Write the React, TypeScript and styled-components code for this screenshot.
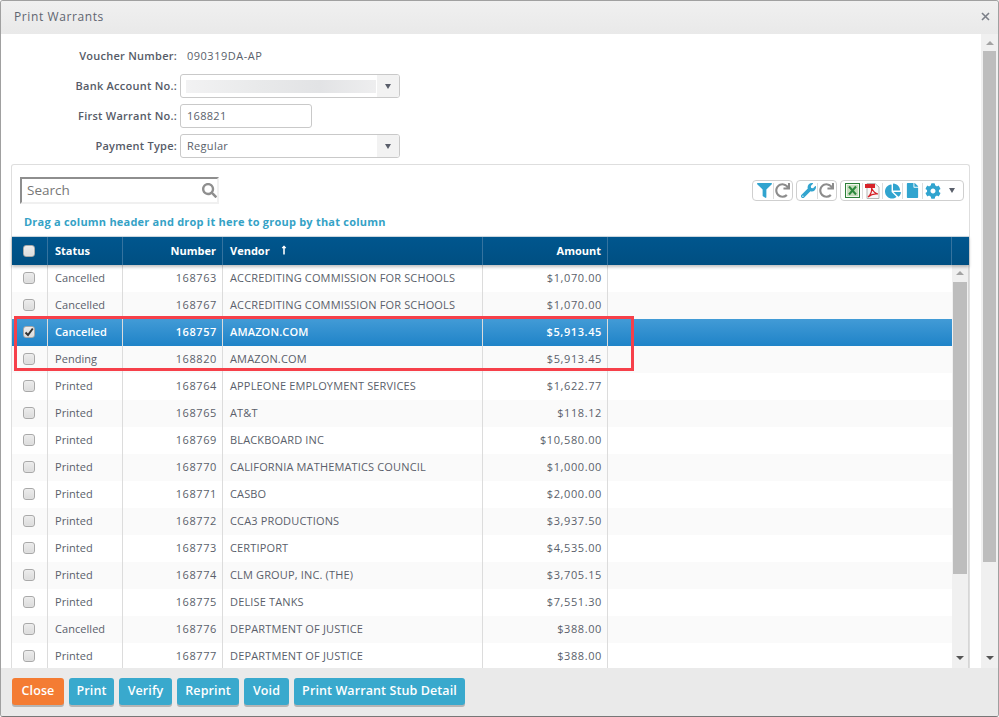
import React from 'react';
import styled, { createGlobalStyle } from 'styled-components';
import { FaCog, FaChartPie, FaFile, FaFilter, FaLongArrowAltUp, FaRedo, FaSearch, FaWrench } from 'react-icons/fa';

const COLUMNS = '36px 75px 100px 260px 125px 1fr';

const GlobalStyle = createGlobalStyle`
  html, body {
    margin: 0;
    padding: 0;
    background: #fff;
  }
  * {
    box-sizing: border-box;
  }
  body {
    font-family: "Open Sans", "Liberation Sans", sans-serif;
    font-size: 11px;
    color: #5a5f6b;
  }
`;

const Window = styled.div`
  width: 999px;
  height: 717px;
  display: flex;
  flex-direction: column;
  overflow: hidden;
  border: 1px solid #a0a0a0;
  border-bottom-color: #777;
  border-radius: 3px;
`;

const TitleBar = styled.div`
  height: 33px;
  flex: none;
  display: flex;
  align-items: center;
  justify-content: space-between;
  padding: 0 8px 2px 13px;
  background: linear-gradient(#f0f0f0, #e9e9e9);
  font-size: 12px;
  letter-spacing: 0.6px;
  color: #5f6570;
`;

const Content = styled.div`
  flex: 1;
  min-height: 0;
  display: flex;
  background: #fff;
`;

const Main = styled.div`
  flex: 1;
  min-width: 0;
  display: flex;
  flex-direction: column;
  padding: 10px 11px 0 10px;
`;

const Form = styled.div`
  display: flex;
  flex-direction: column;
  gap: 6px;
  margin-bottom: 6px;
  margin-left: -10px;
`;

const FormRow = styled.div`
  height: 24px;
  display: flex;
  align-items: center;
  gap: 3px;
`;

const Label = styled.div`
  width: 176px;
  padding-bottom: 2px;
  text-align: right;
  font-weight: 600;
  letter-spacing: 0.25px;
  color: #565b67;
`;

const StaticValue = styled.div`
  padding: 0 0 2px 7px;
  letter-spacing: 0.5px;
`;

const Field = styled.div<{ $width: number }>`
  width: ${(p) => p.$width}px;
  height: 24px;
  display: flex;
  align-items: center;
  justify-content: space-between;
  padding-left: 6px;
  border: 1px solid #c9c9c9;
  border-radius: 3px;
  letter-spacing: 0.3px;
  overflow: hidden;
`;

const FieldText = styled.span`
  margin-bottom: 2px;
`;

const Blurred = styled.div`
  width: 190px;
  height: 13px;
  margin-left: -1px;
  background: linear-gradient(90deg, #f2f2f3, #e8e9ea 40%, #e2e3e5 70%, #eeeeef);
`;

const Caret = styled.div<{ $plain?: boolean }>`
  width: ${(p) => (p.$plain ? 18 : 22)}px;
  flex: none;
  height: 100%;
  display: flex;
  align-items: center;
  justify-content: center;
  background: ${(p) => (p.$plain ? 'none' : '#f2f2f2')};
  &::after {
    content: '';
    border-left: 3.5px solid transparent;
    border-right: 3.5px solid transparent;
    border-top: 5px solid #5a5f6b;
  }
`;

const Card = styled.div`
  flex: 1;
  min-height: 0;
  display: flex;
  flex-direction: column;
  border: 1px solid #dedede;
  border-bottom: 0;
  border-radius: 3px 3px 0 0;
`;

const CardTop = styled.div`
  height: 71px;
  flex: none;
  padding: 12px 5px 0 8px;
  display: grid;
  grid-template-columns: 1fr auto;
  grid-template-rows: 27px auto;
  row-gap: 10px;
`;

const SearchBox = styled.div`
  width: 199px;
  height: 27px;
  display: flex;
  align-items: center;
  justify-content: space-between;
  padding: 0 0 0 5px;
  border: 2px solid #f0f0f0;
  border-top-color: #8e8e8e;
  border-left-color: #8e8e8e;
  font-size: 13.5px;
  color: #777;
  span {
    margin-bottom: 2px;
  }
  svg {
    color: #8f8f8f;
    font-size: 15px;
  }
`;

const Tools = styled.div`
  display: flex;
  gap: 3px;
  margin-top: 3px;
  align-items: flex-start;
`;

const ToolGroup = styled.div`
  height: 21px;
  display: flex;
  align-items: center;
  padding: 0 2px;
  border: 1px solid #cfcfcf;
  border-radius: 4px;
`;

const Tool = styled.div<{ $color?: string; $divider?: boolean; $size?: number; $width?: number }>`
  width: ${(p) => p.$width || 20}px;
  flex: none;
  height: 16px;
  display: flex;
  align-items: center;
  justify-content: center;
  color: ${(p) => p.$color || '#31a4cf'};
  font-size: ${(p) => p.$size || 15}px;
  border-right: ${(p) => (p.$divider ? '1px solid #dcdcdc' : '0')};
`;

const DragHint = styled.div`
  grid-column: 1 / 3;
  padding-left: 4px;
  font-weight: 700;
  font-size: 11px;
  letter-spacing: 0.22px;
  color: #34a2c6;
`;

const HeadRow = styled.div`
  position: relative;
  z-index: 1;
  flex: none;
  height: 29px;
  display: grid;
  grid-template-columns: ${COLUMNS} 17px;
  background: linear-gradient(#00568e, #004f82);
  border-top: 1px solid #c9d6df;
  box-shadow: 0 2px 3px rgba(0, 0, 0, 0.25);
  color: #fff;
  font-weight: 700;
  letter-spacing: 0;
`;

const HeadCell = styled.div<{ $right?: boolean; $center?: boolean }>`
  display: flex;
  align-items: center;
  gap: 9px;
  justify-content: ${(p) => (p.$right ? 'flex-end' : p.$center ? 'center' : 'flex-start')};
  padding: 0 6px ${(p) => (p.$center ? 0 : 2)}px ${(p) => (p.$center ? 4 : 7)}px;
  border-right: 1px solid #35739f;
  svg {
    font-size: 10px;
  }
`;

const GridBody = styled.div`
  position: relative;
  flex: 1;
  min-height: 0;
  display: flex;
  overflow: hidden;
`;

const Rows = styled.div`
  flex: 1;
  min-width: 0;
`;

const Row = styled.div<{ $selected?: boolean; $alt?: boolean }>`
  height: 27px;
  display: grid;
  grid-template-columns: ${COLUMNS};
  background: ${(p) =>
    p.$selected ? 'linear-gradient(#429bd6, #1f83c8)' : p.$alt ? '#fafafa' : '#fff'};
  color: ${(p) => (p.$selected ? '#fff' : '#5a5f6b')};
  font-weight: ${(p) => (p.$selected ? 600 : 400)};
`;

const Cell = styled.div<{ $spacing?: number; $last?: boolean }>`
  display: flex;
  align-items: center;
  padding: 0 6px 2px 7px;
  letter-spacing: ${(p) => p.$spacing ?? 0.15}px;
  border-right: ${(p) => (p.$last ? '0' : '1px solid #dcdcdc')};
  white-space: nowrap;
`;

const NumberCell = styled(Cell)`
  justify-content: flex-end;
  padding-right: 5px;
  letter-spacing: 0.6px;
`;

const CheckCell = styled(Cell)`
  justify-content: center;
  padding: 0 2px 1px 0;
`;

const Check = styled.div`
  width: 12px;
  height: 12px;
  display: flex;
  align-items: center;
  justify-content: center;
  border: 1px solid #a9a9a9;
  border-radius: 3px;
  background: linear-gradient(#ececec, #dcdcdc);
  box-shadow: inset 0 0 1px #fff;
`;

const Highlight = styled.div`
  position: absolute;
  left: 2px;
  top: 51px;
  width: 620px;
  height: 55px;
  border: 3px solid #f6404a;
  pointer-events: none;
`;

const Track = styled.div<{ $width: number; $thumbTop: number; $thumbHeight: number; $inset: number }>`
  position: relative;
  flex: none;
  width: ${(p) => p.$width}px;
  background: #f0f0f0;
  &::before {
    content: '';
    position: absolute;
    left: ${(p) => p.$inset}px;
    right: ${(p) => p.$inset}px;
    top: ${(p) => p.$thumbTop}px;
    height: ${(p) => p.$thumbHeight}px;
    background: #bdbdbd;
  }
`;

const GridTrack = styled(Track)`
  border-right: 1px solid #d6d6d6;
`;

const Arrow = styled.div<{ $up?: boolean; $dark?: boolean; $top: number }>`
  position: absolute;
  left: 50%;
  top: ${(p) => p.$top}px;
  margin-left: -4px;
  border-left: 4px solid transparent;
  border-right: 4px solid transparent;
  ${(p) =>
    p.$up
      ? `border-bottom: 4px solid ${p.$dark ? '#555' : '#a3a3a3'};`
      : `border-top: 4px solid ${p.$dark ? '#555' : '#a3a3a3'};`}
`;

const Footer = styled.div`
  height: 48px;
  flex: none;
  display: flex;
  align-items: flex-start;
  gap: 5px;
  padding: 10px 0 0 11px;
  background: #eaeaea;
`;

const Button = styled.div<{ $orange?: boolean; $width: number }>`
  width: ${(p) => p.$width}px;
  height: 27px;
  display: flex;
  align-items: center;
  justify-content: center;
  padding-bottom: 3px;
  border-radius: 3px;
  background: ${(p) => (p.$orange ? '#f47c33' : '#39a9cd')};
  box-shadow: 0 2px 0 #b5b5b5;
  color: #fff;
  font-weight: 600;
  font-size: 12.5px;
  letter-spacing: 0.1px;
`;

const ExcelIcon = () => (
  <svg width="15" height="15" viewBox="0 0 15 15">
    <rect x="0.5" y="0.5" width="14" height="14" fill="#f1f6ee" stroke="#2c7f38" />
    <rect x="2" y="2" width="11" height="11" fill="#c4dcbb" />
    <path d="M4 3.5 L11 11.5 M11 3.5 L4 11.5" stroke="#2d8a3e" strokeWidth="2" />
  </svg>
);

const PdfIcon = () => (
  <svg width="15" height="16" viewBox="0 0 15 16">
    <path d="M2 .5 H10 L14 4 V15.5 H2 Z" fill="#f7f7f7" stroke="#b5b5b5" />
    <rect x="0" y="1" width="10" height="4" fill="#d7232a" />
    <path d="M3 14 C6 11 7 7 6.5 5 C8 8 10 10.5 13 11 C10 10.5 6 11.5 3 14 Z" fill="none" stroke="#d7232a" strokeWidth="1.2" />
  </svg>
);

const CheckMark = () => (
  <svg width="10" height="10" viewBox="0 0 10 10">
    <path d="M1.5 5.5 L4 8 L8.8 1.5" fill="none" stroke="#333" strokeWidth="2" />
  </svg>
);

const warrants = [
  ['Cancelled', '168763', 'ACCREDITING COMMISSION FOR SCHOOLS', '$1,070.00'],
  ['Cancelled', '168767', 'ACCREDITING COMMISSION FOR SCHOOLS', '$1,070.00'],
  ['Cancelled', '168757', 'AMAZON.COM', '$5,913.45'],
  ['Pending', '168820', 'AMAZON.COM', '$5,913.45'],
  ['Printed', '168764', 'APPLEONE EMPLOYMENT SERVICES', '$1,622.77'],
  ['Printed', '168765', 'AT&T', '$118.12'],
  ['Printed', '168769', 'BLACKBOARD INC', '$10,580.00'],
  ['Printed', '168770', 'CALIFORNIA MATHEMATICS COUNCIL', '$1,000.00'],
  ['Printed', '168771', 'CASBO', '$2,000.00'],
  ['Printed', '168772', 'CCA3 PRODUCTIONS', '$3,937.50'],
  ['Printed', '168773', 'CERTIPORT', '$4,535.00'],
  ['Printed', '168774', 'CLM GROUP, INC. (THE)', '$3,705.15'],
  ['Printed', '168775', 'DELISE TANKS', '$7,551.30'],
  ['Cancelled', '168776', 'DEPARTMENT OF JUSTICE', '$388.00'],
  ['Printed', '168777', 'DEPARTMENT OF JUSTICE', '$388.00'],
];

const App: React.FC = () => {
  return (
    <Window>
      <GlobalStyle />
      <TitleBar>
        Print Warrants
        <svg width="9" height="9" viewBox="0 0 9 9">
          <path d="M1 1 L8 8 M8 1 L1 8" stroke="#7b7f88" strokeWidth="1.6" />
        </svg>
      </TitleBar>
      <Content>
        <Main>
          <Form>
            <FormRow>
              <Label>Voucher Number:</Label>
              <StaticValue>090319DA-AP</StaticValue>
            </FormRow>
            <FormRow>
              <Label>Bank Account No.:</Label>
              <Field $width={220}>
                <Blurred />
                <Caret />
              </Field>
            </FormRow>
            <FormRow>
              <Label>First Warrant No.:</Label>
              <Field $width={132}>
                <FieldText>168821</FieldText>
              </Field>
            </FormRow>
            <FormRow>
              <Label>Payment Type:</Label>
              <Field $width={220}>
                <FieldText>Regular</FieldText>
                <Caret />
              </Field>
            </FormRow>
          </Form>
          <Card>
            <CardTop>
              <SearchBox>
                <span>Search</span>
                <FaSearch />
              </SearchBox>
              <Tools>
                <ToolGroup>
                  <Tool $divider $width={19}><FaFilter /></Tool>
                  <Tool $color="#8c8c8c" $width={16}><FaRedo /></Tool>
                </ToolGroup>
                <ToolGroup>
                  <Tool $divider $width={19}><FaWrench /></Tool>
                  <Tool $color="#8c8c8c" $width={16}><FaRedo /></Tool>
                </ToolGroup>
                <ToolGroup>
                  <Tool $divider><ExcelIcon /></Tool>
                  <Tool $divider><PdfIcon /></Tool>
                  <Tool $divider $size={16}><FaChartPie /></Tool>
                  <Tool $divider><FaFile /></Tool>
                  <Tool $size={16}><FaCog /></Tool>
                  <Caret $plain />
                </ToolGroup>
              </Tools>
              <DragHint>Drag a column header and drop it here to group by that column</DragHint>
            </CardTop>
            <HeadRow>
              <HeadCell $center><Check /></HeadCell>
              <HeadCell>Status</HeadCell>
              <HeadCell $right>Number</HeadCell>
              <HeadCell>
                Vendor
                <FaLongArrowAltUp />
              </HeadCell>
              <HeadCell $right>Amount</HeadCell>
              <HeadCell />
              <div />
            </HeadRow>
            <GridBody>
              <Rows>
                {warrants.map(([status, number, vendor, amount], i) => (
                  <Row key={number} $selected={i === 2} $alt={i % 2 === 1}>
                    <CheckCell>
                      <Check>{i === 2 && <CheckMark />}</Check>
                    </CheckCell>
                    <Cell $spacing={0.05}>{status}</Cell>
                    <NumberCell>{number}</NumberCell>
                    <Cell>{vendor}</Cell>
                    <NumberCell>{amount}</NumberCell>
                    <Cell $last />
                  </Row>
                ))}
              </Rows>
              <GridTrack $width={17} $thumbTop={17} $thumbHeight={292} $inset={1}>
                <Arrow $up $top={6} />
                <Arrow $dark $top={391} />
              </GridTrack>
              <Highlight />
            </GridBody>
          </Card>
        </Main>
        <Track $width={17} $thumbTop={17} $thumbHeight={511} $inset={2}>
          <Arrow $up $top={7} />
          <Arrow $dark $top={622} />
        </Track>
      </Content>
      <Footer>
        <Button $orange $width={52}>Close</Button>
        <Button $width={45}>Print</Button>
        <Button $width={53}>Verify</Button>
        <Button $width={62}>Reprint</Button>
        <Button $width={45}>Void</Button>
        <Button $width={171}>Print Warrant Stub Detail</Button>
      </Footer>
    </Window>
  );
};

export default App;
